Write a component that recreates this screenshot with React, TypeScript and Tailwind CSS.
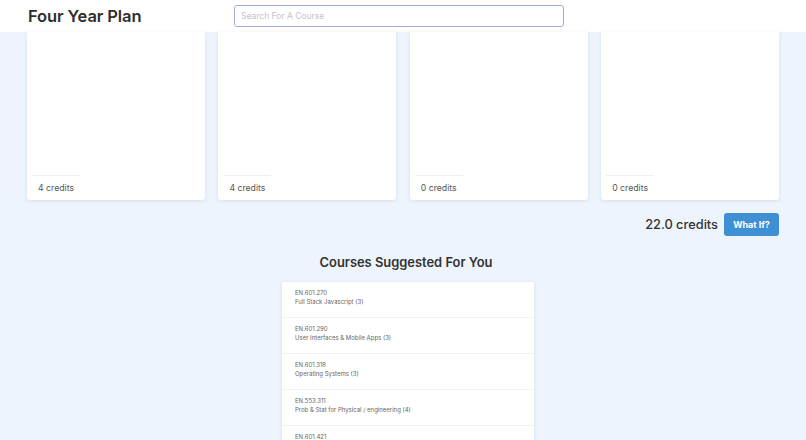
import React from "react";

const semesters = [{ credits: 4 }, { credits: 4 }, { credits: 0 }, { credits: 0 }];

const suggested = [
  { code: "EN.601.270", name: "Full Stack Javascript (3)" },
  { code: "EN.601.290", name: "User Interfaces & Mobile Apps (3)" },
  { code: "EN.601.318", name: "Operating Systems (3)" },
  { code: "EN.553.311", name: "Prob & Stat for Physical / engineering (4)" },
  { code: "EN.601.421", name: "" },
];

export default function App() {
  return (
    <div className="min-h-screen bg-[#edf4fc] font-['Inter',sans-serif] text-[#333]">
      {/* Header */}
      <header className="h-8 bg-white flex items-center">
        <h1 className="ml-[28px] w-[206px] text-[16.5px] font-semibold tracking-[-0.1px] text-[#2e2e2e]">
          Four Year Plan
        </h1>
        <input
          className="h-[22px] w-[330px] rounded-[3px] border-[1.5px] border-[#a3aad9] px-[6px] text-[8.5px] outline-none placeholder:text-[#c4c4c4]"
          placeholder="Search For A Course"
        />
      </header>

      {/* Semesters */}
      <div className="grid grid-cols-4 gap-[13.5px] px-[27px]">
        {semesters.map((s, i) => (
          <div
            key={i}
            className="h-[168px] bg-white rounded-b-[3px] shadow-[0_1px_4px_rgba(60,80,110,0.12)] flex flex-col justify-end px-[5px]"
          >
            <div className="self-start border-t border-[#f0f0f0] px-[6px] pt-[6px] pb-[6px] text-[8.7px] leading-[12px] text-[#555]">
              {s.credits} credits
            </div>
          </div>
        ))}
      </div>

      {/* Totals */}
      <div className="flex items-center justify-end gap-[6px] px-[27px] mt-[13px]">
        <span className="text-[12.8px] font-medium text-[#333]">22.0 credits</span>
        <button className="h-[23px] w-[55px] rounded-[3px] bg-[#3e8fd4] text-[9px] font-bold text-white">
          What If?
        </button>
      </div>

      {/* Suggestions */}
      <h2 className="mt-[17px] text-center text-[12.9px] font-semibold text-[#333] pl-[6px]">
        Courses Suggested For You
      </h2>
      <div className="flex justify-center pl-[10px] mt-[10px]">
        <ul className="w-[252px] bg-white rounded-[2px] shadow-[0_1px_4px_rgba(60,80,110,0.12)]">
          {suggested.map((c) => (
            <li
              key={c.code}
              className="h-[36px] border-b border-[#f3f3f3] px-[13px] pt-[5.5px] text-[6px] leading-[9px] text-[#666]"
            >
              <div>{c.code}</div>
              {c.name && <div>{c.name}</div>}
            </li>
          ))}
        </ul>
      </div>
    </div>
  );
}
